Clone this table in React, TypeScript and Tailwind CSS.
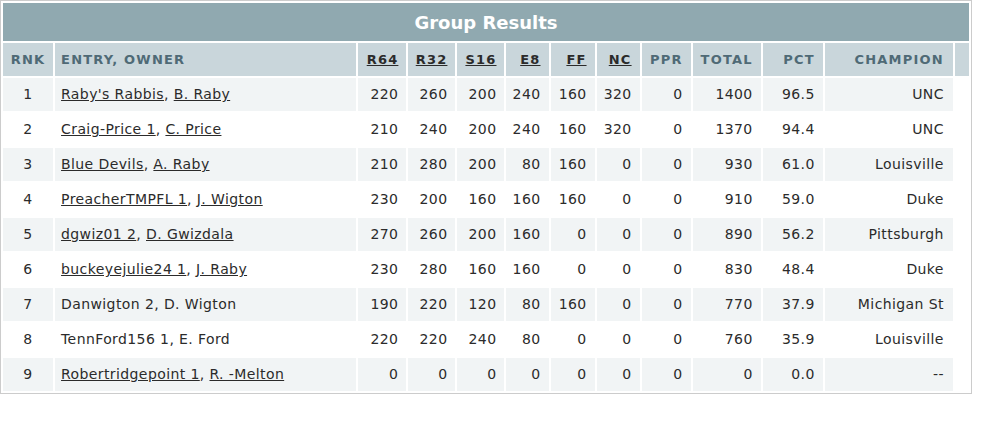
const rows = [
  { rnk: 1, entry: "Raby's Rabbis", owner: "B. Raby", link: true, r64: 220, r32: 260, s16: 200, e8: 240, ff: 160, nc: 320, ppr: 0, total: 1400, pct: "96.5", champ: "UNC" },
  { rnk: 2, entry: "Craig-Price 1", owner: "C. Price", link: true, r64: 210, r32: 240, s16: 200, e8: 240, ff: 160, nc: 320, ppr: 0, total: 1370, pct: "94.4", champ: "UNC" },
  { rnk: 3, entry: "Blue Devils", owner: "A. Raby", link: true, r64: 210, r32: 280, s16: 200, e8: 80, ff: 160, nc: 0, ppr: 0, total: 930, pct: "61.0", champ: "Louisville" },
  { rnk: 4, entry: "PreacherTMPFL 1", owner: "J. Wigton", link: true, r64: 230, r32: 200, s16: 160, e8: 160, ff: 160, nc: 0, ppr: 0, total: 910, pct: "59.0", champ: "Duke" },
  { rnk: 5, entry: "dgwiz01 2", owner: "D. Gwizdala", link: true, r64: 270, r32: 260, s16: 200, e8: 160, ff: 0, nc: 0, ppr: 0, total: 890, pct: "56.2", champ: "Pittsburgh" },
  { rnk: 6, entry: "buckeyejulie24 1", owner: "J. Raby", link: true, r64: 230, r32: 280, s16: 160, e8: 160, ff: 0, nc: 0, ppr: 0, total: 830, pct: "48.4", champ: "Duke" },
  { rnk: 7, entry: "Danwigton 2", owner: "D. Wigton", link: false, r64: 190, r32: 220, s16: 120, e8: 80, ff: 160, nc: 0, ppr: 0, total: 770, pct: "37.9", champ: "Michigan St" },
  { rnk: 8, entry: "TennFord156 1", owner: "E. Ford", link: false, r64: 220, r32: 220, s16: 240, e8: 80, ff: 0, nc: 0, ppr: 0, total: 760, pct: "35.9", champ: "Louisville" },
  { rnk: 9, entry: "Robertridgepoint 1", owner: "R. -Melton", link: true, r64: 0, r32: 0, s16: 0, e8: 0, ff: 0, nc: 0, ppr: 0, total: 0, pct: "0.0", champ: "--" },
];

const num = "text-right pr-2";

export default function App() {
  return (
    <div className="bg-white min-h-screen font-['DejaVu_Sans',Verdana,sans-serif] text-[14px] text-[#2b2b2b] tracking-[0.4px]">
      <div className="w-[972px] border border-[#cccccc]">
        <table className="table-fixed w-[970px] border-separate border-spacing-[2px]">
          <colgroup>
            <col className="w-[50px]" />
            <col className="w-[301px]" />
            <col className="w-[48px]" />
            <col className="w-[47px]" />
            <col className="w-[47px]" />
            <col className="w-[42px]" />
            <col className="w-[44px]" />
            <col className="w-[43px]" />
            <col className="w-[49px]" />
            <col className="w-[68px]" />
            <col className="w-[60px]" />
            <col className="w-[128px]" />
            <col className="w-[14px]" />
          </colgroup>
          <thead>
            <tr>
              <th colSpan={13} className="h-[38px] bg-[#90a9b0] text-white text-[18px] font-bold tracking-normal text-center">
                Group Results
              </th>
            </tr>
            <tr className="h-[33px] bg-[#c9d6db] text-[13px] font-bold text-[#4f6a76] tracking-[1.2px]">
              <th className="text-center">RNK</th>
              <th className="text-left pl-[6px]">ENTRY, OWNER</th>
              <th className={num}><span className="underline text-[#2b2b2b]">R64</span></th>
              <th className={num}><span className="underline text-[#2b2b2b]">R32</span></th>
              <th className={num}><span className="underline text-[#2b2b2b]">S16</span></th>
              <th className={num}><span className="underline text-[#2b2b2b]">E8</span></th>
              <th className={num}><span className="underline text-[#2b2b2b]">FF</span></th>
              <th className={num}><span className="underline text-[#2b2b2b]">NC</span></th>
              <th className={num}>PPR</th>
              <th className={num}>TOTAL</th>
              <th className={num}>PCT</th>
              <th className="text-right pr-[9px]">CHAMPION</th>
              <th></th>
            </tr>
          </thead>
          <tbody>
            {rows.map((r, i) => (
              <tr key={r.rnk} className={`h-[33px] ${i % 2 === 0 ? "bg-[#f1f4f5]" : "bg-white"}`}>
                <td className="text-center">{r.rnk}</td>
                <td className="text-left pl-[6px] whitespace-nowrap">
                  <span className={r.link ? "underline" : ""}>{r.entry}</span>,{" "}
                  <span className={r.link ? "underline" : ""}>{r.owner}</span>
                </td>
                <td className={num}>{r.r64}</td>
                <td className={num}>{r.r32}</td>
                <td className={num}>{r.s16}</td>
                <td className={num}>{r.e8}</td>
                <td className={num}>{r.ff}</td>
                <td className={num}>{r.nc}</td>
                <td className={num}>{r.ppr}</td>
                <td className={num}>{r.total}</td>
                <td className={num}>{r.pct}</td>
                <td className="text-right pr-[9px]">{r.champ}</td>
              </tr>
            ))}
          </tbody>
        </table>
      </div>
    </div>
  );
}
